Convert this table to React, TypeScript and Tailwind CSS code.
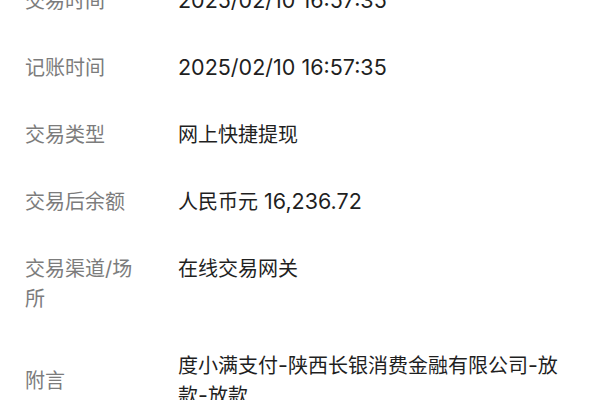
import React from 'react';

const rows: { label: string; value: string; top?: boolean }[] = [
    { label: '交易时间', value: '2025/02/10 16:57:35' },
    { label: '记账时间', value: '2025/02/10 16:57:35' },
    { label: '交易类型', value: '网上快捷提现' },
    { label: '交易后余额', value: '人民币元 16,236.72' },
    { label: '交易渠道/场所', value: '在线交易网关', top: true },
    { label: '附言', value: '度小满支付-陕西长银消费金融有限公司-放款-放款' },
];

// latin digits in the screenshot run a bit wider than the CJK glyphs
const Value: React.FC<{ text: string }> = ({ text }) => (
    <>
        {text.split(/([\u4e00-\u9fff]+)/).map((part, i) =>
            /[\u4e00-\u9fff]/.test(part) ? (
                <span key={i}>{part}</span>
            ) : (
                <span key={i} className="text-[21.5px] leading-[20px]">{part}</span>
            )
        )}
    </>
);

const App: React.FC = () => {
    return (
        <div
            className="w-[600px] h-[400px] overflow-hidden bg-white"
            style={{ fontFamily: 'Inter, "Noto Sans CJK SC", sans-serif' }}
        >
            <div className="-mt-[33px] flex flex-col">
                {rows.map(r => (
                    <div
                        key={r.label}
                        className={`flex py-[18.5px] pl-[25px] pr-[30px] text-[20px] leading-[30px] ${r.top ? 'items-start' : 'items-center'}`}
                    >
                        <div className="w-[118px] shrink-0 text-[#7c7c7c]">{r.label}</div>
                        <div className="ml-[35px] flex-1 text-[#1f1f1f]">
                            <Value text={r.value} />
                        </div>
                    </div>
                ))}
            </div>
        </div>
    );
};

export default App;
